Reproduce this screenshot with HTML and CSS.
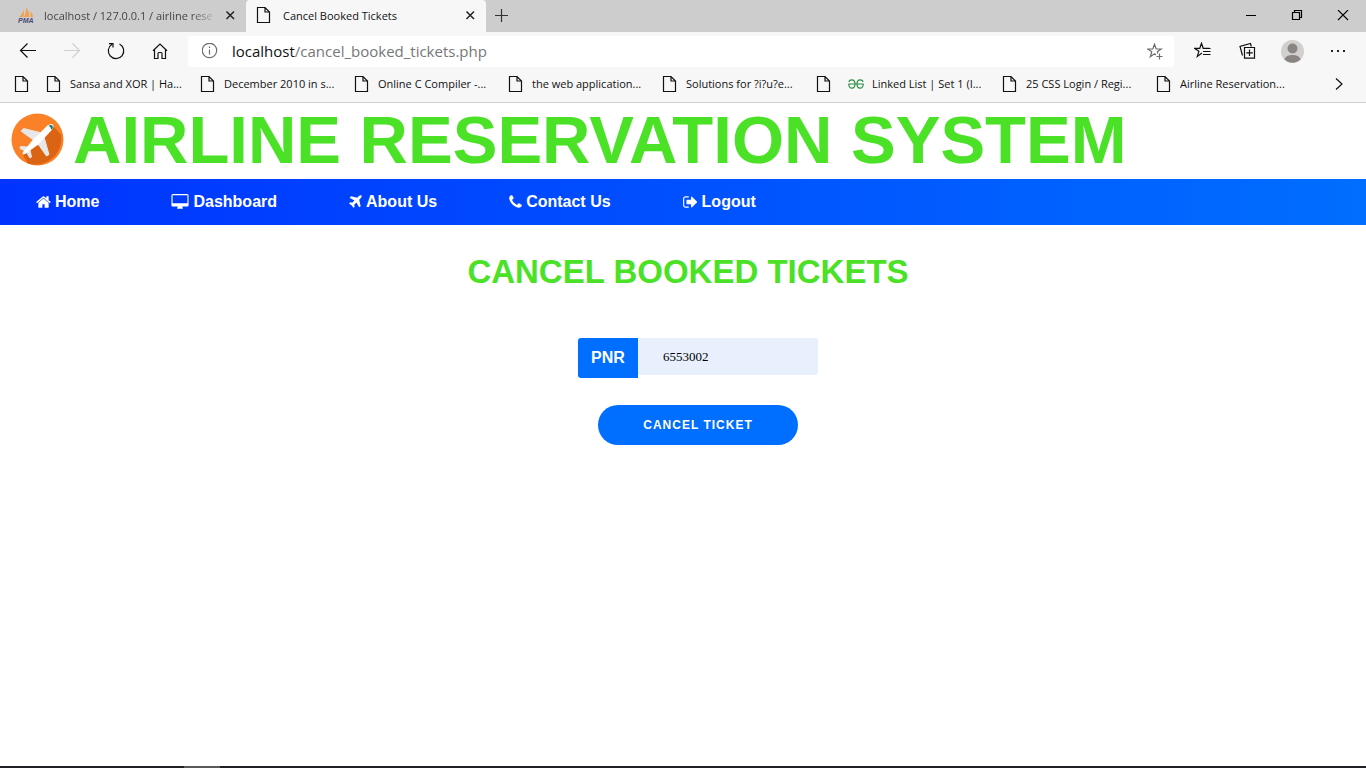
FILE: index.html
```html
<!DOCTYPE html>
<html lang="en">
<head>
<meta charset="utf-8">
<title>Cancel Booked Tickets</title>
<link rel="stylesheet" href="styles.css">
</head>
<body>
<svg class="defs" aria-hidden="true">
  <symbol id="page" viewBox="0 0 16 18"><path d="M1.500 1.500h7.500L13.500 6V16.500h-12zM9 1.500V6H13.500" fill="none" stroke="#111" stroke-width="1.200"/></symbol>
  <symbol id="close" viewBox="0 0 12 12"><path d="M2.500 2.500l7.500 7.500M10 2.500l-7.500 7.500" fill="none" stroke="#222" stroke-width="1.500"/></symbol>
</svg>
<div class="browser">
  <div class="tabs">
    <div class="tab">
      <svg class="favicon" viewBox="0 0 16 16"><path d="M1.500 10C3 8.500 4.500 6 5.500 3c.8 2.500 .5 5-.3 7zM6 10c1.600-2.500 2.200-6 2.200-9.500C10.500 3 11.500 7 11 10zM12 10c.6-2 .6-4 .2-5.500C14 6 15 8 15 10z" fill="#f3a04b"/><text x="0" y="15.500" class="pma">PMA</text></svg>
      <span class="tab-title faded">localhost / 127.0.0.1 / airline rese</span>
      <button class="icon-button small" aria-label="Close tab"><svg width="12" height="12"><use href="#close"/></svg></button>
    </div>
    <div class="tab active">
      <svg class="favicon" viewBox="0 0 16 18"><use href="#page"/></svg>
      <span class="tab-title">Cancel Booked Tickets</span>
      <button class="icon-button small" aria-label="Close tab"><svg width="12" height="12"><use href="#close"/></svg></button>
    </div>
    <button class="icon-button new-tab" aria-label="New tab"><svg width="14" height="14"><path d="M6.500 0v13M0 6.500h13" stroke="#333" stroke-width="1.200"/></svg></button>
    <div class="window-buttons">
      <button class="icon-button window" aria-label="Minimize"><svg width="12" height="12"><path d="M1 5.500h10" stroke="#000"/></svg></button>
      <button class="icon-button window" aria-label="Restore"><svg width="12" height="12"><path d="M1.500 2.500h7v7h-7zM3.500 2.500v-2h7v7h-2" fill="none" stroke="#000" stroke-width="1.200"/></svg></button>
      <button class="icon-button window" aria-label="Close"><svg width="12" height="12"><path d="M1 0l10 10M11 0L1 10" stroke="#000" stroke-width="1.100"/></svg></button>
    </div>
  </div>
  <div class="toolbar">
    <div class="controls">
      <button class="icon-button tool" aria-label="Back"><svg width="18" height="18" class="line"><path d="M17 8.500H1.500M8.500 1.500l-7 7 7 7"/></svg></button>
      <button class="icon-button tool" aria-label="Forward"><svg width="18" height="18" class="line pale"><path d="M1 8.500h15.500M9.500 1.500l7 7-7 7"/></svg></button>
      <button class="icon-button tool" aria-label="Refresh"><svg width="18" height="18" class="line"><path d="M12.500 2a7.700 7.700 0 1 1-7.500 0.300M2 1.600h4v4"/></svg></button>
      <button class="icon-button tool" aria-label="Home"><svg width="18" height="18" class="line"><path d="M2 8.800L9 2l7 6.800M3.500 7.500V16.500H7V11.500q0-1 1-1h2q1 0 1 1v5h3.500V7.500"/></svg></button>
    </div>
    <div class="address">
      <svg width="16" height="16" viewBox="0 0 16 16" class="line grey"><circle cx="7.500" cy="7.500" r="7.200"/><path d="M7.500 6.500v5M7.500 3.500v1.500"/></svg>
      <span class="url">localhost<span class="path">/cancel_booked_tickets.php</span></span>
      <button class="icon-button star" aria-label="Add to favorites"><svg width="17" height="17" class="line grey"><path d="M9 12l-1.500-1.300-4.200 3L4.800 8.800 .8 6h5L7.500 1.200 9.200 6h5l-3.900 2.800.5 1.700M12.500 10.500v6M9.500 13.500h6"/></svg></button>
    </div>
    <div class="actions">
      <button class="icon-button action" aria-label="Favorites"><svg width="18" height="18" class="line"><path d="M8 11l-4.700 3.400L4.900 9.300 .5 6.300h5.300L7.500 1.300l1.700 5H15.500M9 9.500H16.500M9 12.500H16.500M9 6.500H16.500"/></svg></button>
      <button class="icon-button action" aria-label="Collections"><svg width="18" height="18" class="line"><path d="M3.500 13.500L1 4.300 11.500 1.500l.8 3M5.500 5.500h10v10.700H5.500zM10.500 7.500v6.500M7.300 10.800h6.500"/></svg></button>
      <button class="icon-button action" aria-label="Profile"><svg width="23" height="23" viewBox="0 0 23 23"><circle cx="11.500" cy="11.500" r="11.500" fill="#d2d0ce"/><circle cx="11.500" cy="8.500" r="5" fill="#8a8582"/><path d="M3.300 19.300Q5 15 11.500 15t8.200 4.300A11.500 11.500 0 0 1 3.300 19.300z" fill="#8a8582"/></svg></button>
      <button class="icon-button action" aria-label="Settings"><svg width="18" height="18"><path d="M2 8h2v2H2zM8 8h2v2H8zM14 8h2v2h-2z" fill="#222"/></svg></button>
    </div>
  </div>
  <div class="bookmarks">
    <a href="#" class="bookmark bare" aria-label="Bookmark"><svg class="mark"><use href="#page"/></svg></a>
    <a href="#" class="bookmark"><svg class="mark"><use href="#page"/></svg><span>Sansa and XOR | Ha...</span></a>
    <a href="#" class="bookmark"><svg class="mark"><use href="#page"/></svg><span>December 2010 in s...</span></a>
    <a href="#" class="bookmark"><svg class="mark"><use href="#page"/></svg><span>Online C Compiler -...</span></a>
    <a href="#" class="bookmark"><svg class="mark"><use href="#page"/></svg><span>the web application...</span></a>
    <a href="#" class="bookmark"><svg class="mark"><use href="#page"/></svg><span>Solutions for ?i?u?e...</span></a>
    <a href="#" class="bookmark bare" aria-label="Bookmark"><svg class="mark"><use href="#page"/></svg></a>
    <a href="#" class="bookmark"><svg class="mark" viewBox="0 0 16 18"><path d="M.8 6.800Q1.500 4.800 3.800 4.800q3.200 0 3.200 4.200t-3.200 4.200Q1 13.200 .8 9H15.200q-.2 4.200-3 4.200Q9 13.200 9 9t3.200-4.200q2.300 0 3 2" fill="none" stroke="#2f8d46" stroke-width="1.200"/></svg><span>Linked List | Set 1 (I...</span></a>
    <a href="#" class="bookmark"><svg class="mark"><use href="#page"/></svg><span>25 CSS Login / Regi...</span></a>
    <a href="#" class="bookmark"><svg class="mark"><use href="#page"/></svg><span>Airline Reservation...</span></a>
    <button class="icon-button more" aria-label="More bookmarks"><svg width="14" height="14" class="line"><path d="M4 1.500l6 5.500-6 5.500"/></svg></button>
  </div>
</div>
<header class="masthead">
  <svg class="logo" viewBox="0 0 54 54" role="img" aria-label="Airline logo">
    <circle cx="27.500" cy="26.500" r="26" fill="#fa8128"/>
    <path d="M42 12L51 21.500A26 26 0 0 1 18 50.500L13 42z" fill="#db6314"/>
    <path d="M30 19.500L13.500 15.500 11 18 23.500 27zM34 24L39 41.500 36.500 43 27 29.500zM17.500 34L10.500 33.500l-.5 2 6.500 3zM20 37l1.500 7-1.500 1-4-6.500z" fill="#e7e7e7" stroke="#e7e7e7" stroke-linejoin="round"/>
    <path d="M37.500 12.500Q41 10 42.800 11.500T41.700 17L28.500 31.500 15 41q-3.500 1.500-2-2L23 26.500z" fill="#fff"/>
    <path d="M38.300 13q2.700-1.700 4-.5t0 4l-1.500-.5q.5-1.900-2.500-3z" fill="#137f74"/>
  </svg>
  <h1 class="brand">AIRLINE RESERVATION SYSTEM</h1>
</header>
<nav class="menu">
  <a href="#"><svg class="glyph" width="15" height="16" viewBox="64 0 1664 1792"><path d="M1472 992v480q0 26-19 45t-45 19h-384v-384h-256v384h-384q-26 0-45-19t-19-45v-480q0-1 .5-3t.5-3l575-474 575 474q1 2 1 6zm223-69l-62 74q-8 9-21 11h-3q-13 0-21-7l-692-577-692 577q-12 8-24 7-13-2-21-11l-62-74q-8-10-7-23.500t11-21.500l719-599q32-26 76-26t76 26l244 204v-195q0-14 9-23t23-9h192q14 0 23 9t9 23v408l219 182q10 8 11 21.500t-7 23.500z"/></svg>Home</a>
  <a href="#"><svg class="glyph" width="18" height="16" viewBox="-64 0 1920 1792"><path d="M1728 992v-832q0-13-9.500-22.500t-22.500-9.500h-1600q-13 0-22.500 9.500t-9.500 22.500v832q0 13 9.500 22.500t22.500 9.500h1600q13 0 22.500-9.500t9.500-22.500zm128-832v1088q0 66-47 113t-113 47h-544q0 37 16 77.500t32 71 16 43.500q0 26-19 45t-45 19h-512q-26 0-45-19t-19-45q0-14 16-44t32-70 16-78h-544q-66 0-113-47t-47-113v-1088q0-66 47-113t113-47h1600q66 0 113 47t47 113z"/></svg>Dashboard</a>
  <a href="#"><svg class="glyph" width="13" height="16" viewBox="192 0 1408 1792"><path d="M1568 160q44 52 12 148t-108 172l-161 161 160 696q5 19-12 33l-128 96q-7 6-19 6-4 0-7-1-15-3-21-16l-279-508-259 259 53 194q5 17-8 31l-96 96q-9 9-23 9h-2q-15-2-24-13l-189-252-252-189q-11-7-13-23-1-13 9-25l96-97q9-9 23-9 6 0 8 1l194 53 259-259-508-279q-14-8-17-24-2-16 9-27l128-128q14-13 30-8l665 159 160-160q76-76 172-108t148 12z"/></svg>About Us</a>
  <a href="#"><svg class="glyph" width="13" height="16" viewBox="192 0 1408 1792"><path d="M1600 1240q0 27-10 70.500t-21 68.500q-21 50-122 106-94 51-186 51-27 0-52.500-3.500t-57.500-12.500-47.500-14.500-55.500-20.500-49-18q-98-35-175-83-128-79-264.500-215.500t-215.500-264.500q-48-77-83-175-3-9-18-49t-20.500-55.500-14.500-47.500-12.500-57.500-3.500-52.500q0-92 51-186 56-101 106-122 25-11 68.500-21t70.500-10q14 0 21 3 18 6 53 76 11 19 30 54t35 63.500 31 53.500q3 4 17.500 25t21.500 35.500 7 28.500q0 20-28.500 50t-62 55-62 53-28.500 46q0 9 5 22.500t8.500 20.500 14 24 11.500 19q76 137 174 235t235 174q2 1 19 11.500t24 14 20.500 8.500 22.500 5q18 0 46-28.500t53-62 55-62 50-28.500q14 0 28.500 7t35.500 21.500 25 17.500q25 15 53.500 31t63.500 35 54 30q70 35 76 53 3 7 3 21z"/></svg>Contact Us</a>
  <a href="#"><svg class="glyph" width="15" height="16" viewBox="64 0 1664 1792"><path d="M704 1440q0 4 1 20t.5 26.500-3 23.500-10 19.500-20.500 6.500h-320q-119 0-203.500-84.500t-84.500-203.500v-704q0-119 84.500-203.500t203.500-84.500h320q13 0 22.500 9.500t9.500 22.500q0 4 1 20t.5 26.500-3 23.500-10 19.500-20.500 6.500h-320q-66 0-113 47t-47 113v704q0 66 47 113t113 47h312l11.500 1 11.500 3 8 5.500 7 9 2 13.500zm928-544q0 26-19 45l-544 544q-19 19-45 19t-45-19-19-45v-288h-448q-26 0-45-19t-19-45v-384q0-26 19-45t45-19h448v-288q0-26 19-45t45-19 45 19l544 544q19 19 19 45z"/></svg>Logout</a>
</nav>
<main class="content">
  <h2 class="heading">CANCEL BOOKED TICKETS</h2>
  <form class="cancel-form">
    <div class="field">
      <label for="pnr">PNR</label>
      <input id="pnr" type="text" value="6553002">
    </div>
    <button type="button" class="submit">CANCEL TICKET</button>
  </form>
</main>
<footer class="taskbar"><div class="running"></div></footer>
</body>
</html>
```
FILE: styles.css
```css
* {
  box-sizing: border-box;
}

body {
  margin: 0;
  min-height: 100vh;
  display: flex;
  flex-direction: column;
  background: #fff;
  font-family: "Liberation Sans", Arial, sans-serif;
}

.defs {
  display: none;
}

.browser {
  background: #f7f7f7;
  border-bottom: 1px solid #cfcfcf;
  font-family: "Open Sans", "Noto Sans", sans-serif;
  font-size: 11px;
  color: #111;
}

.icon-button {
  border: 0;
  padding: 0;
  background: none;
  display: flex;
  align-items: center;
  justify-content: center;
  flex: none;
}

.line {
  fill: none;
  stroke: #111;
  stroke-width: 1.200;
}

.pale {
  stroke: #cfcfcf;
}

.grey {
  stroke: #6d6d6d;
}

.tabs {
  display: flex;
  height: 32px;
  background: #cdcdcd;
}

.tab {
  display: flex;
  align-items: center;
  width: 246px;
  padding: 0 9px 2px 18px;
  color: #444;
}

.tab.active {
  width: 240px;
  padding-left: 10px;
  background: #f7f7f7;
  border-radius: 4px 4px 0 0;
  color: #111;
}

.favicon {
  width: 16px;
  height: 18px;
  flex: none;
}

.pma {
  font: italic bold 7px "Liberation Sans", sans-serif;
  fill: #4a4a78;
}

.tab-title {
  flex: 1;
  margin: 0 6px 0 10px;
  overflow: hidden;
  white-space: nowrap;
}

.tab.active .tab-title {
  margin-left: 11px;
}

.faded {
  mask-image: linear-gradient(to right, #000 85%, transparent);
}

.small {
  width: 14px;
  height: 14px;
}

.new-tab {
  width: 32px;
}

.window-buttons {
  display: flex;
  margin-left: auto;
}

.window {
  width: 46px;
}

.toolbar {
  display: flex;
  align-items: center;
  height: 38px;
}

.controls {
  display: flex;
  padding: 0 6px;
}

.tool {
  width: 44px;
  height: 32px;
}

.address {
  display: flex;
  flex: 1;
  align-items: center;
  height: 31px;
  padding: 0 10px 0 14px;
  background: #fff;
  border-radius: 3px;
}

.url {
  flex: 1;
  margin-left: 14px;
  font-size: 15px;
}

.path {
  color: #777;
}

.actions {
  display: flex;
  padding: 0 6px;
}

.action {
  width: 45px;
  height: 32px;
}

.bookmarks {
  display: flex;
  align-items: center;
  height: 32px;
  padding: 0 20px 5px 14px;
}

.bookmark {
  display: flex;
  align-items: center;
  gap: 8px;
  width: 154px;
  color: #111;
  text-decoration: none;
  white-space: nowrap;
}

.bookmark.bare {
  width: 32px;
}

.mark {
  width: 16px;
  height: 18px;
  flex: none;
}

.more {
  width: 14px;
  height: 18px;
  margin-left: auto;
}

.masthead {
  display: flex;
  align-items: center;
  gap: 9px;
  padding: 0 10px 2px;
  height: 76px;
}

.logo {
  width: 54px;
  height: 54px;
  flex: none;
}

.brand {
  margin: 0;
  font-size: 67px;
  line-height: 74px;
  color: #4be127;
  white-space: nowrap;
}

.menu {
  display: flex;
  background: linear-gradient(to right, #0033ff, #006eff);
}

.menu a {
  display: flex;
  align-items: center;
  gap: 4px;
  padding: 14px 36px;
  color: #fff;
  font-size: 16px;
  font-weight: bold;
  line-height: 18px;
  text-decoration: none;
}

.glyph {
  fill: #fff;
}

.content {
  flex: 1;
}

.heading {
  margin: 28px 0 0;
  padding-left: 10px;
  font-size: 33px;
  line-height: 38px;
  text-align: center;
  color: #4be127;
}

.cancel-form {
  display: flex;
  flex-direction: column;
  align-items: center;
  gap: 27px;
  margin-top: 47px;
  padding-left: 30px;
}

.field {
  display: flex;
  align-items: flex-start;
}

.field label {
  width: 60px;
  border-radius: 3px 0 0 3px;
  background: #006eff;
  color: #fff;
  font-size: 16px;
  font-weight: bold;
  line-height: 40px;
  text-align: center;
}

.field input {
  width: 180px;
  height: 37px;
  padding: 0 25px;
  border: 0;
  border-radius: 0 3px 3px 0;
  background: #e8f0fe;
  color: #000;
  font: 13px "Liberation Serif", "Times New Roman", serif;
}

.submit {
  width: 200px;
  height: 40px;
  border: 0;
  border-radius: 20px;
  background: #006eff;
  color: #fff;
  font: bold 12px "Liberation Sans", Arial, sans-serif;
  letter-spacing: 1px;
}

.taskbar {
  height: 2px;
  padding-left: 184px;
  background: #202124;
}

.running {
  width: 36px;
  height: 2px;
  background: #5a5a5a;
}
```
